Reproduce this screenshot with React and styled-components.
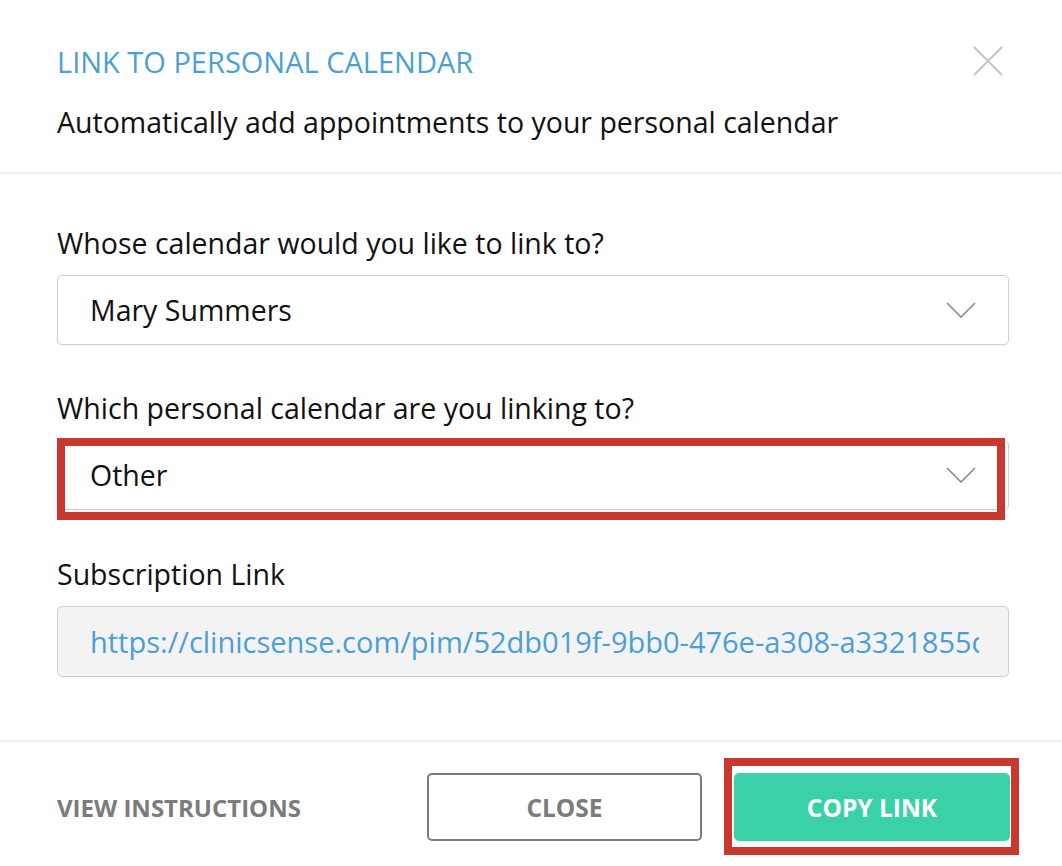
import styled, { createGlobalStyle } from 'styled-components';

const GlobalStyle = createGlobalStyle`
  html, body {
    margin: 0;
    padding: 0;
    background: #fff;
  }
  body {
    font-family: "Open Sans", "Liberation Sans", sans-serif;
    color: #111;
  }
  * { box-sizing: border-box; }
`;

const Dialog = styled.div`
  width: 1062px;
  height: 866px;
  background: #fff;
  display: flex;
  flex-direction: column;
  overflow: hidden;
`;

const Header = styled.div`
  position: relative;
  padding: 42px 57px 0;
  height: 174px;
  border-bottom: 2px solid #eeeeee;
`;

const Title = styled.h2`
  margin: 0;
  font-size: 29px;
  font-weight: 400;
  line-height: 40px;
  color: #4a9fd6;
  text-transform: uppercase;
`;

const Subtitle = styled.p`
  margin: 20px 0 0;
  font-size: 28.5px;
  line-height: 40px;
  color: #111;
`;

const CloseX = styled.button`
  position: absolute;
  top: 45px;
  right: 57px;
  width: 34px;
  height: 32px;
  padding: 0;
  border: none;
  background: none;
  cursor: pointer;
  svg { display: block; }
`;

const Body = styled.div`
  padding: 49px 53px 0 57px;
  flex: 1;
  display: flex;
  flex-direction: column;
`;

const Field = styled.div`
  display: flex;
  flex-direction: column;
  margin-top: ${p => p.$gap || 0}px;
`;

const Label = styled.label`
  font-size: 28.5px;
  line-height: 40px;
  color: #111;
  margin-bottom: 12px;
`;

const Highlight = styled.div`
  position: relative;
`;

const RedBox = styled.div`
  position: absolute;
  left: 0;
  top: -2px;
  right: 4px;
  bottom: -10px;
  border: 8px solid #c9382e;
  pointer-events: none;
`;

const Select = styled.div`
  height: 70px;
  border: 1.5px solid #cfcfcf;
  border-radius: 5px;
  background: #fff;
  display: flex;
  align-items: center;
  justify-content: space-between;
  padding: 0 32px 0 32px;
  font-size: 28.5px;
  color: #111;
  box-shadow: 0 1px 2px rgba(0, 0, 0, 0.06);
`;

const LinkBox = styled.div`
  height: 71px;
  border: 1.5px solid #cfcfcf;
  border-radius: 5px;
  background: #f3f3f3;
  display: flex;
  align-items: center;
  padding: 0 0 0 32px;
  font-size: 29px;
  color: #4a9fd6;
  white-space: nowrap;
  overflow: hidden;
`;

const LinkText = styled.span`
  overflow: hidden;
  width: 889px;
  display: block;
`;

const Footer = styled.div`
  border-top: 2px solid #eeeeee;
  height: 126px;
  padding: 31px 52px 0 57px;
  display: flex;
  align-items: flex-start;
`;

const TextAction = styled.button`
  border: none;
  background: none;
  padding: 0;
  height: 68px;
  font-family: inherit;
  font-size: 24px;
  font-weight: 700;
  color: #7b7b7b;
  text-transform: uppercase;
  cursor: pointer;
  margin-right: auto;
`;

const ButtonWrap = styled.div`
  position: relative;
  margin-left: ${p => p.$ml || 0}px;
`;

const RedFrame = styled.div`
  position: absolute;
  left: -10px;
  top: -15px;
  right: -9px;
  bottom: -14px;
  border: 8px solid #c9382e;
  pointer-events: none;
`;

const Button = styled.button`
  width: ${p => p.$w}px;
  height: 68px;
  border-radius: 5px;
  font-family: inherit;
  font-size: 24.5px;
  font-weight: 700;
  text-transform: uppercase;
  cursor: pointer;
  border: ${p => (p.$primary ? 'none' : '2px solid #7b7b7b')};
  background: ${p => (p.$primary ? '#3ad1a9' : '#fff')};
  color: ${p => (p.$primary ? '#fff' : '#7b7b7b')};
`;

const Chevron = () => (
  <svg width="30" height="16" viewBox="0 0 30 16" fill="none">
    <path d="M1 1 L15 15 L29 1" stroke="#8a8a8a" strokeWidth="1.6" />
  </svg>
);

const App = () => {
  return (
    <>
      <GlobalStyle />
      <Dialog>
        <Header>
          <Title>Link to Personal Calendar</Title>
          <Subtitle>Automatically add appointments to your personal calendar</Subtitle>
          <CloseX aria-label="Close">
            <svg width="34" height="32" viewBox="0 0 34 32">
              <path d="M3 2 L31 30 M31 2 L3 30" stroke="#c4c4c4" strokeWidth="2" />
            </svg>
          </CloseX>
        </Header>
        <Body>
          <Field>
            <Label>Whose calendar would you like to link to?</Label>
            <Select>
              <span>Mary Summers</span>
              <Chevron />
            </Select>
          </Field>
          <Field $gap={43}>
            <Label>Which personal calendar are you linking to?</Label>
            <Highlight>
              <Select>
                <span>Other</span>
                <Chevron />
              </Select>
              <RedBox />
            </Highlight>
          </Field>
          <Field $gap={44}>
            <Label>Subscription Link</Label>
            <LinkBox>
              <LinkText>https://clinicsense.com/pim/52db019f-9bb0-476e-a308-a3321855c1e4</LinkText>
            </LinkBox>
          </Field>
        </Body>
        <Footer>
          <TextAction>View Instructions</TextAction>
          <ButtonWrap>
            <Button $w={275}>Close</Button>
          </ButtonWrap>
          <ButtonWrap $ml={32}>
            <Button $primary $w={276}>Copy Link</Button>
            <RedFrame />
          </ButtonWrap>
        </Footer>
      </Dialog>
    </>
  );
};

export default App;
